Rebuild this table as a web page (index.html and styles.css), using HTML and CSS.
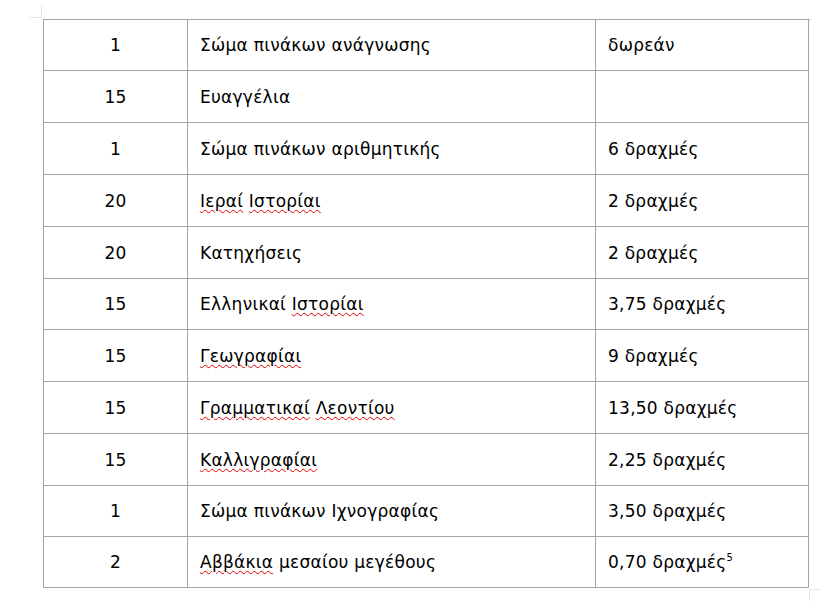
FILE: index.html
```html
<!DOCTYPE html>
<html lang="el">
<head>
<meta charset="utf-8">
<link rel="stylesheet" href="styles.css">
</head>
<body>
<div class="page">
  <span class="mark mark-tl"></span>
  <span class="mark mark-br"></span>
  <div class="grid">
    <div class="c num"><span>1</span></div><div class="c"><span>Σώμα πινάκων ανάγνωσης</span></div><div class="c"><span>δωρεάν</span></div>
    <div class="c num"><span>15</span></div><div class="c"><span>Ευαγγέλια</span></div><div class="c"></div>
    <div class="c num"><span>1</span></div><div class="c"><span>Σώμα πινάκων αριθμητικής</span></div><div class="c"><span>6 δραχμές</span></div>
    <div class="c num"><span>20</span></div><div class="c"><span><span class="sp">Ιεραί</span> <span class="sp">Ιστορίαι</span></span></div><div class="c"><span>2 δραχμές</span></div>
    <div class="c num"><span>20</span></div><div class="c"><span>Κατηχήσεις</span></div><div class="c"><span>2 δραχμές</span></div>
    <div class="c num"><span>15</span></div><div class="c"><span>Ελληνικαί <span class="sp">Ιστορίαι</span></span></div><div class="c"><span>3,75 δραχμές</span></div>
    <div class="c num"><span>15</span></div><div class="c"><span><span class="sp">Γεωγραφίαι</span></span></div><div class="c"><span>9 δραχμές</span></div>
    <div class="c num"><span>15</span></div><div class="c"><span><span class="sp">Γραμματικαί</span> <span class="sp">Λεοντίου</span></span></div><div class="c"><span>13,50 δραχμές</span></div>
    <div class="c num"><span>15</span></div><div class="c"><span><span class="sp">Καλλιγραφίαι</span></span></div><div class="c"><span>2,25 δραχμές</span></div>
    <div class="c num"><span>1</span></div><div class="c"><span>Σώμα πινάκων Ιχνογραφίας</span></div><div class="c"><span>3,50 δραχμές</span></div>
    <div class="c num"><span>2</span></div><div class="c"><span><span class="sp">Αββάκια</span> μεσαίου μεγέθους</span></div><div class="c"><span>0,70 δραχμές<sup class="fn">5</sup></span></div>
  </div>
</div>
</body>
</html>
```

FILE: styles.css
```css
html, body {
  margin: 0;
  padding: 0;
  background: #ffffff;
}

.page {
  position: relative;
  width: 836px;
  height: 610px;
  padding: 19px 0 0 43px;
  box-sizing: border-box;
  font-family: "DejaVu Sans", Verdana, sans-serif;
  font-size: 17px;
  letter-spacing: 0.25px;
  color: #000000;
}

.grid {
  display: grid;
  grid-template-columns: 144px 408px 213px;
  grid-template-rows: 51px 52px 52px 52px 52px 51px 52px 52px 52px 51px 51px;
  width: 766px;
  border-top: 1px solid #a5a5a5;
  border-left: 1px solid #a5a5a5;
}

.c {
  box-sizing: border-box;
  border-right: 1px solid #a5a5a5;
  border-bottom: 1px solid #a5a5a5;
  display: flex;
  align-items: center;
  padding: 0 12px 0 12px;
  line-height: 20px;
  white-space: nowrap;
}

.num {
  justify-content: center;
  padding: 0;
}

.sp {
  text-decoration: underline wavy #e00000;
  text-decoration-thickness: 1px;
  text-underline-offset: 2px;
}

.fn {
  font-size: 10px;
  line-height: 0;
  vertical-align: 7px;
  letter-spacing: 0;
}

.mark {
  position: absolute;
  width: 11px;
  height: 11px;
}

.mark-tl {
  left: 30px;
  top: 6px;
  border-right: 1px solid #e6e6e6;
  border-bottom: 1px solid #e6e6e6;
}

.mark-br {
  left: 809px;
  top: 589px;
  border-left: 1px solid #e6e6e6;
  border-top: 1px solid #e6e6e6;
}
```
